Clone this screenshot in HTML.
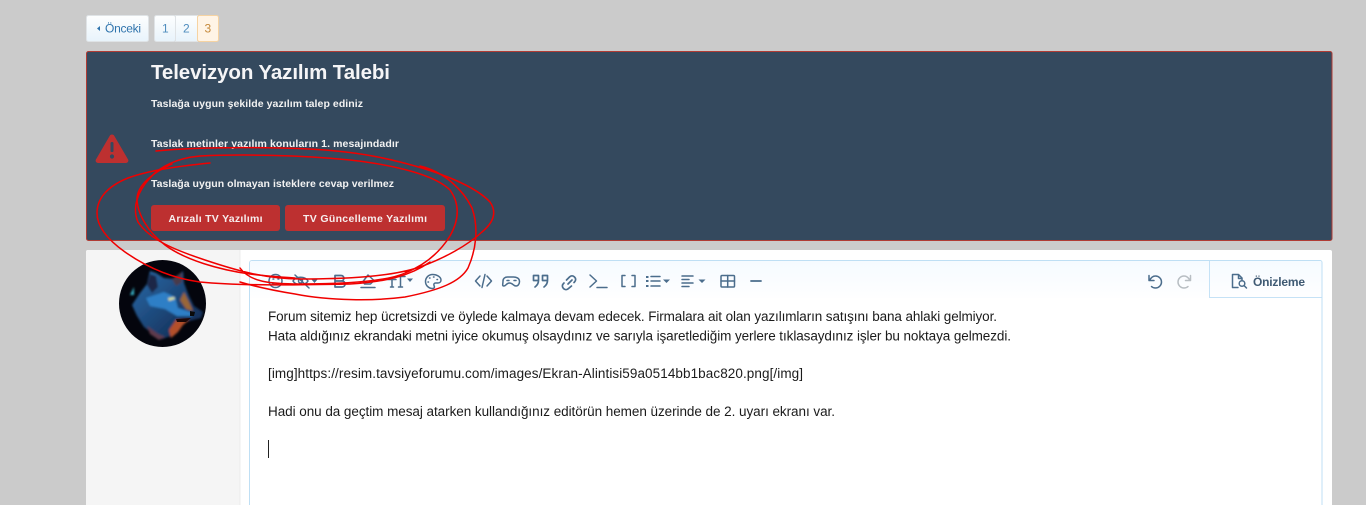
<!DOCTYPE html>
<html lang="tr"><head><meta charset="utf-8"><title>Televizyon Yazılım Talebi</title>
<style>
html,body{margin:0;padding:0;background:#cbcbcb;width:1366px;height:505px;overflow:hidden}
svg{display:block;position:absolute;left:0;top:0;filter:blur(.3px)}
text{font-family:"Liberation Sans",sans-serif}
.e{font-size:13.5px;fill:#1b1b1b}
.s{font-size:10.5px;font-weight:bold;fill:#f2f2f2}
.ic{fill:none;stroke:#4b6d8c;stroke-width:1.5;stroke-linecap:round;stroke-linejoin:round}
.f{fill:#4b6d8c}
.r{fill:none;stroke:#f00000;stroke-width:1.5;stroke-linecap:round;stroke-linejoin:round}
</style></head><body>
<svg width="1366" height="505" viewBox="0 0 1366 505" xmlns="http://www.w3.org/2000/svg">
<defs>
<linearGradient id="b2" x1="0" y1="0" x2="0" y2="1"><stop offset="0" stop-color="#fdfefe"/><stop offset="1" stop-color="#e8f3fb"/></linearGradient>
<linearGradient id="tb" x1="0" y1="0" x2="0" y2="1"><stop offset="0" stop-color="#f6fbff"/><stop offset="1" stop-color="#fefeff"/></linearGradient>
<linearGradient id="w" x1="0" y1="0" x2="1" y2="1"><stop offset="0" stop-color="#2b6cab"/><stop offset="1" stop-color="#0f2347"/></linearGradient>
<clipPath id="av"><circle cx="162.5" cy="303.5" r="43.5"/></clipPath>
<filter id="bl" x="-10%" y="-10%" width="120%" height="120%"><feGaussianBlur stdDeviation="1"/></filter>
</defs>

<!-- pagination -->
<rect x="86.5" y="15.5" width="62" height="26" rx="2" fill="url(#b2)" stroke="#dfe3e6"/>
<path d="M97 28.500l3-2.500v5z" fill="#2f74ad"/>
<text x="105" y="32.500" font-size="12" fill="#2f74ad" textLength="36">Önceki</text>
<rect x="154.500" y="15.500" width="21" height="26" rx="2" fill="url(#b2)" stroke="#dfe3e6"/>
<rect x="175.500" y="15.500" width="22" height="26" fill="url(#b2)" stroke="#dfe3e6"/>
<rect x="197.500" y="15.500" width="21" height="26" rx="2" fill="#fff4e6" stroke="#f6d3a2"/>
<text x="162" y="32.500" font-size="12" fill="#4f8dbe">1</text>
<text x="183" y="32.500" font-size="12" fill="#4f8dbe">2</text>
<text x="204.500" y="32.500" font-size="12" fill="#c5893a">3</text>

<!-- notice -->
<rect x="86.500" y="51.500" width="1245.500" height="189" rx="2" fill="#34495e" stroke="#b03b34"/>
<text x="151" y="79" font-size="20.500" font-weight="bold" fill="#f5f5f7" textLength="239">Televizyon Yazılım Talebi</text>
<text class="s" x="151" y="107" textLength="212">Taslağa uygun şekilde yazılım talep ediniz</text>
<text class="s" x="151" y="147" textLength="248">Taslak metinler yazılım konuların 1. mesajındadır</text>
<text class="s" x="151" y="187" textLength="243">Taslağa uygun olmayan isteklere cevap verilmez</text>
<path d="M112 134.500c1 0 1.800.5 2.300 1.400l13.700 23.500c1 1.700-.2 3.600-2.200 3.600H98.200c-2 0-3.200-1.900-2.200-3.600l13.700-23.500c.5-.9 1.300-1.400 2.300-1.400z" fill="#bd3030"/>
<rect x="110.500" y="142" width="3" height="10" rx="1.300" fill="#34495e"/>
<circle cx="112" cy="156.500" r="2.100" fill="#34495e"/>
<rect x="151" y="205" width="129" height="26" rx="3" fill="#bd3030"/>
<rect x="285" y="205" width="160" height="26" rx="3" fill="#bd3030"/>
<text x="168.500" y="222" font-size="10.500" font-weight="bold" fill="#f7eeee" textLength="94">Arızalı TV Yazılımı</text>
<text x="303" y="222" font-size="10.500" font-weight="bold" fill="#f7eeee" textLength="124">TV Güncelleme Yazılımı</text>

<!-- post -->
<path d="M88 250h1242a2 2 0 0 1 2 2v253H86V252a2 2 0 0 1 2-2z" fill="#fff"/>
<path d="M88 250H240V505H86V252a2 2 0 0 1 2-2z" fill="#f5f5f5"/>
<path d="M240 250v255" stroke="#ececec"/>

<!-- avatar -->
<circle cx="162.500" cy="303.500" r="43.500" fill="#04050d"/>
<g clip-path="url(#av)"><g filter="url(#bl)">
<path d="M132 305l8-12 7-9 3-13 6 2 8 5 10 1 9-8 1 12 5 13 5 10 9 6-2 6-12 3-8 1-5 7-5 7-9 3-9-5-9-7-7-11z" fill="url(#w)"/>
<path d="M150 274l6 2 2 11-6 6-5-8z" fill="#1e2746"/>
<path d="M182 272l0 10-6 4-4-7z" fill="#4a3a4a"/>
<path d="M146 298l18-6 11 5 3 11 13 4 1 4-15 0-12-7-15-3z" fill="#2f7fc6"/>
<path d="M168 298l6-1 1 2-6 2z" fill="#d8dd9a"/>
<path d="M184 292l6 12 3 7-7-2-6-9z" fill="#9a6638"/>
<path d="M176 320l13 0-6 5-5 7-7 6-2-8z" fill="#b3502a"/>
<path d="M134 287l-4 8 4 0z" fill="#38b4c9"/>
<path d="M147 326l11 8 7 3-6 3-9-6z" fill="#5f3a4c"/>
</g>
<path d="M176 319l15-1-5 4-9 0z" fill="#1c0808"/>
<path d="M190 311l5 1-1 4-4 0z" fill="#0a0a0a"/>
</g>

<!-- editor -->
<path d="M252 260.500H1320a2 2 0 0 1 2 2V512H249.500V263a2.500 2.500 0 0 1 2.500-2.500z" fill="#fff" stroke="#bfdff4"/>
<path d="M250 298V263a2 2 0 0 1 2-2H1320a1.500 1.500 0 0 1 1.500 1.500V298z" fill="url(#tb)"/>
<path d="M1209.500 261v36.500h112" stroke="#c5e2f6" fill="none"/>

<!-- toolbar icons -->
<g class="ic">
<circle cx="275.500" cy="281" r="6.500"/><path d="M272.500 283.500c1.800 1.500 4.200 1.500 6 0"/><path d="M273 279h.8M278 279h.8"/>
<path d="M293 281c3-5 12-5 15 0-3 5-12 5-15 0z"/><path d="M295 275l14 13"/><circle cx="300.500" cy="281" r="2"/>
<path d="M335 275.500h6c3.800 0 3.800 5.500 0 5.500h-6zM335 281h7c4 0 4 6 0 6h-7zM335 275.500V287" stroke-width="1.700"/>
<path d="M368 275l6 5.500-3.500 3.500h-6l-1.500-2.500z"/><path d="M361 287.500h14"/>
<path d="M388 279.500h8M392 279.500V287M390.500 287h3M396 276.500h9M400.500 276.500V287M398.500 287h4"/>
<path d="M432.500 274.500a7 7 0 1 0 0 14c2.500 0 2-2 1.500-3s0-2.500 1.500-2.500h2.500c2 0 3-1.500 3-3 0-3-4-5.500-8.500-5.500z"/>
<path d="M428 282h.5M429.500 278h.5M433.500 277h.5M437 279.500h.5"/>
<path d="M480 276l-4.500 5 4.500 5M487 276l4.500 5-4.500 5M485 274.500l-3 13"/>
<path d="M503 281c0-2.500 2-4 4.500-4h6c2.500 0 6 1 6 4.500 0 2.500-1.500 4.500-3.500 4.500-3 0-3-3-6.500-3s-3 3-6 3c-1.500 0-0.500-2-.5-5z"/>
<path d="M507 280.500h2M514 280.500h2"/>
<path d="M533.500 275.500h5v5c0 3-1.500 5-3.500 6.500M533.500 275.500v5h5M542.500 275.500h5v5c0 3-1.500 5-3.500 6.500M542.500 275.500v5h5" stroke-width="1.700"/>
<path d="M568 284l4-4M566.500 280l3-3c1.500-1.500 3.500-1.500 5 0s1.500 3.500 0 5l-.5.5M571.500 286l-3 2.500c-1.500 1.500-3.500 1.500-5 0s-1.500-3.500 0-5l.5-.5" stroke-width="1.700"/>
<path d="M590 275l6.500 6-6.500 6M597 287.500h10"/>
<path d="M625 275.500h-3v11h3M632 275.500h3v11h-3"/>
<path d="M651 276.500h9M651 281h9M651 286h9"/>
<path d="M682 276h11M682 279.500h7M682 283h11M682 286.500h7"/>
<rect x="721" y="275.500" width="13.500" height="11.500" rx="1"/><path d="M721 281h13.500M727.700 275.500v11.500"/>
<path d="M751 281h10" stroke-width="1.800"/>
<path d="M1149 275.500v5h5M1149.500 280.500c1.500-3 3.500-4.500 6-4.500a6 6 0 1 1 0 12c-1.500 0-3-.5-4-1.500" stroke="#4b6d8c"/>
<path d="M1190.500 275.500v5h-5M1190 280.500c-1.500-3-3.500-4.500-6-4.500a6 6 0 1 0 0 12c1.500 0 3-.5 4-1.500" stroke="#b8bec3"/>
<path d="M1238 287.500h-5.500v-13h6l3.500 3.500v2M1238.500 275v3.500h3.500"/>
<circle cx="1242" cy="283.500" r="2.800"/><path d="M1244 285.500l2.500 2.500"/>
</g>
<g class="f">
<path d="M646 276h2.500v2H646zM646 280h2.500v2H646zM646 285h2.500v2H646z"/>
<path d="M311.500 279.500h6l-3 3.500zM407 278.500h6l-3 3.500zM663 279.500h7l-3.500 3.500zM698.500 279.500h7l-3.500 3.500z"/>
</g>
<text x="1253" y="286" font-size="12" font-weight="bold" fill="#3f5a73" textLength="52">Önizleme</text>

<!-- editor text -->
<text class="e" x="268" y="321" textLength="729">Forum sitemiz hep ücretsizdi ve öylede kalmaya devam edecek. Firmalara ait olan yazılımların satışını bana ahlaki gelmiyor.</text>
<text class="e" x="268" y="340.500" textLength="743">Hata aldığınız ekrandaki metni iyice okumuş olsaydınız ve sarıyla işaretlediğim yerlere tıklasaydınız işler bu noktaya gelmezdi.</text>
<text class="e" x="268" y="378" textLength="535">[img]https://resim.tavsiyeforumu.com/images/Ekran-Alintisi59a0514bb1bac820.png[/img]</text>
<text class="e" x="268" y="416" textLength="567">Hadi onu da geçtim mesaj atarken kullandığınız editörün hemen üzerinde de 2. uyarı ekranı var.</text>
<path d="M268.500 440v18" stroke="#222"/>

<!-- red hand-drawn strokes -->
<path class="r" d="M156 151C185 148 230 147 280 148C330 149 365 153 400 162C440 172 475 186 490 202C497 212 494 222 482 232C468 245 445 258 420 267C390 277 345 279 300 279C265 279 235 270 205 260C175 250 150 240 138 222C132 208 137 192 150 178C160 166 178 158 200 156C240 154 300 155 350 160C395 165 435 175 450 190C460 204 459 220 450 236C440 252 425 265 405 273C385 282 340 284 300 284C270 284 250 282 240 268"/>
<path class="r" d="M210 163C180 166 150 170 128 178C108 186 97 198 97 213C97 227 108 240 125 252C145 266 170 278 200 282C240 286 300 285 350 284C385 282 410 276 430 262"/>
<path class="r" d="M420 166C445 172 463 190 472 208C479 228 476 250 468 268C460 282 440 290 405 297C375 301 330 301 295 294C270 290 250 285 240 282"/>
<path class="r" d="M172 164C150 174 138 186 137 198C137 214 148 232 165 245C185 260 220 270 250 274C265 276 280 277 295 278"/>
</svg>
</body></html>
